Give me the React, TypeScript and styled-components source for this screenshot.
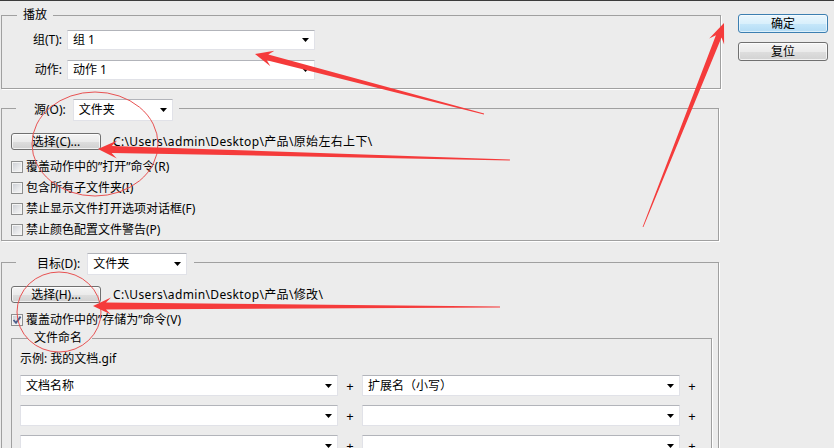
import React from "react";
import styled, { createGlobalStyle } from "styled-components";

const Global = createGlobalStyle`
  html, body { margin: 0; padding: 0; background: #ececec; }
  body {
    font-family: "Noto Sans", "Noto Sans CJK SC", sans-serif;
    font-size: 12px;
    color: #000;
  }
`;

const Page = styled.div`
  position: relative;
  width: 834px;
  height: 448px;
  overflow: hidden;
  box-sizing: border-box;
  border-top: 1px solid #3c3c3c;
  padding-left: 1px;
  display: flex;
  align-items: flex-start;
`;

const Main = styled.div`
  width: 721px;
  padding-top: 6px;
  display: flex;
  flex-direction: column;
`;

const Side = styled.div`
  margin-left: 16px;
  margin-top: 13px;
  display: flex;
  flex-direction: column;
  gap: 9px;
`;

const DlgButton = styled.button<{ $primary?: boolean }>`
  width: 90px;
  height: 19px;
  box-sizing: border-box;
  padding: 0;
  font: inherit;
  font-size: 12px;
  line-height: 16px;
  color: #000;
  border-radius: 3px;
  border: 1px solid ${(p) => (p.$primary ? "#3c7fb1" : "#707070")};
  box-shadow: inset 0 0 0 1px ${(p) => (p.$primary ? "rgba(255,255,255,0.55)" : "rgba(255,255,255,0.7)")};
  background: ${(p) =>
    p.$primary
      ? "linear-gradient(#eaf6fd 0%, #d9f0fc 50%, #c6e7fa 51%, #b3dcf5 100%)"
      : "linear-gradient(#f4f4f4 0%, #ebebeb 50%, #dedede 51%, #d2d2d2 100%)"};
`;

const Group = styled.fieldset<{ $w: number; $mt?: number }>`
  margin: ${(p) => p.$mt ?? 0}px 0 0 0;
  padding: 0;
  min-width: 0;
  width: ${(p) => p.$w}px;
  box-sizing: border-box;
  border: 1px solid #a0a0a0;
  box-shadow: 1px 1px 0 #ffffff;
`;

const Legend = styled.legend<{ $ml: number; $pl: number; $pr?: number }>`
  margin-left: ${(p) => p.$ml}px;
  padding: 0 ${(p) => p.$pr ?? 6}px 0 ${(p) => p.$pl}px;
  line-height: 16px;
`;

const LegendRow = styled.div`
  display: flex;
  align-items: flex-start;
  gap: 7px;
  height: 18px;
  line-height: 22px;
`;

const FormGrid = styled.div`
  display: grid;
  grid-template-columns: 60px 248px;
  column-gap: 5px;
  row-gap: 10px;
  padding: 7px 0 8px 0;
  align-items: center;
`;

const FieldLabel = styled.span`
  text-align: right;
  line-height: 20px;
`;

const Select = styled.div<{ $w: number; $h?: number }>`
  width: ${(p) => p.$w}px;
  height: ${(p) => p.$h ?? 20}px;
  flex: none;
  box-sizing: border-box;
  background: #fff;
  border: 1px solid #e1e2e8;
  border-top-color: #b2b4ba;
  display: flex;
  align-items: center;
  justify-content: space-between;
  padding: 0 5px 0 5px;
  line-height: 16px;
  white-space: nowrap;
`;

const Caret = () => (
  <svg width="7" height="4" viewBox="0 0 7 4">
    <polygon points="0,0 7,0 3.5,4" fill="#000" />
  </svg>
);

const Dropdown = ({ w, h, value }: { w: number; h?: number; value?: string }) => (
  <Select $w={w} $h={h}>
    <span>{value ?? ""}</span>
    <Caret />
  </Select>
);

const Body = styled.div<{ $pt: number; $pb?: number; $pl?: number }>`
  padding: ${(p) => p.$pt}px 0 ${(p) => p.$pb ?? 0}px ${(p) => p.$pl ?? 9}px;
  display: flex;
  flex-direction: column;
`;

const PickRow = styled.div`
  display: flex;
  align-items: center;
  gap: 12px;
  height: 17px;
`;

const PickButton = styled.button`
  width: 90px;
  height: 17px;
  box-sizing: border-box;
  padding: 0;
  font: inherit;
  font-size: 12px;
  line-height: 14px;
  color: #000;
  border: 1px solid #707070;
  border-radius: 3px;
  box-shadow: inset 0 0 0 1px rgba(255, 255, 255, 0.7);
  background: linear-gradient(#f4f4f4 0%, #ebebeb 50%, #dedede 51%, #d0d0d0 100%);
`;

const PathText = styled.span`
  line-height: 16px;
  letter-spacing: 0.35px;
  white-space: nowrap;
`;

const CheckList = styled.div<{ $mt: number; $rh: number }>`
  margin-top: ${(p) => p.$mt}px;
  display: grid;
  grid-auto-rows: ${(p) => p.$rh}px;
`;

const CheckRow = styled.label`
  display: flex;
  align-items: center;
  gap: 3px;
  line-height: 16px;
  white-space: nowrap;
`;

const Box = styled.span`
  width: 12px;
  height: 12px;
  box-sizing: border-box;
  border: 1px solid #8e8f8f;
  box-shadow: inset 0 0 0 1px #f4f4f4;
  background: linear-gradient(135deg, #c9ccd2 0%, #e8e9eb 60%, #f7f7f7 100%);
  display: flex;
  align-items: center;
  justify-content: center;
`;

const Check = ({ text, checked }: { text: string; checked?: boolean }) => (
  <CheckRow>
    <Box>
      {checked && (
        <svg width="10" height="10" viewBox="0 0 10 10">
          <path d="M1.5 5 L4 7.8 L8.6 1.6" stroke="#4a5f8c" strokeWidth="1.8" fill="none" />
        </svg>
      )}
    </Box>
    <span>{text}</span>
  </CheckRow>
);

const InnerBody = styled.div`
  padding: 5px 0 20px 8px;
  display: flex;
  flex-direction: column;
`;

const Example = styled.div`
  line-height: 16px;
  height: 16px;
`;

const NameGrid = styled.div`
  margin-top: 8px;
  display: grid;
  grid-template-columns: 318px 24px 318px 24px;
  grid-auto-rows: 21px;
  row-gap: 9px;
  align-items: center;
`;

const Plus = styled.span`
  text-align: center;
  font-size: 13px;
  line-height: 16px;
`;

const Overlay = styled.svg`
  position: absolute;
  left: 0;
  top: 0;
  pointer-events: none;
`;

type Pt = [number, number];

function arrow(tip: Pt, tail: Pt, L: number, hh: number, sh: number): string {
  const dx = tail[0] - tip[0];
  const dy = tail[1] - tip[1];
  const len = Math.hypot(dx, dy);
  const ux = dx / len;
  const uy = dy / len;
  const nx = -uy;
  const ny = ux;
  const at = (d: number, n: number): Pt => [tip[0] + ux * d + nx * n, tip[1] + uy * d + ny * n];
  const pts: Pt[] = [
    tip,
    at(L, hh),
    at(L * 0.72, sh),
    [tail[0] + nx * 0.4, tail[1] + ny * 0.4],
    [tail[0] - nx * 0.4, tail[1] - ny * 0.4],
    at(L * 0.72, -sh),
    at(L, -hh),
  ];
  return pts.map((p) => `${p[0].toFixed(1)},${p[1].toFixed(1)}`).join(" ");
}

const Annotations = () => (
  <Overlay width="834" height="448" viewBox="0 0 834 448">
    <ellipse cx="95" cy="143" rx="63" ry="52" fill="none" stroke="#e85252" strokeWidth="1" />
    <ellipse cx="59" cy="311" rx="42" ry="40" fill="none" stroke="#e85252" strokeWidth="1" />
    <polygon points={arrow([255, 53], [484, 113], 18, 8, 3)} fill="#f53b3b" />
    <polygon points={arrow([98, 148], [510, 159], 19, 9, 3.5)} fill="#f53b3b" />
    <polygon points={arrow([724, 22], [643, 226], 20, 8, 3)} fill="#f53b3b" />
    <polygon points={arrow([93, 305], [500, 306], 18, 8.5, 3.5)} fill="#f53b3b" />
  </Overlay>
);

export default function App() {
  return (
    <>
      <Global />
      <Page>
        <Main>
          <Group $w={720}>
            <Legend $ml={15} $pl={6}>播放</Legend>
            <FormGrid>
              <FieldLabel>组(T):</FieldLabel>
              <Dropdown w={248} value="组 1" />
              <FieldLabel>动作:</FieldLabel>
              <Dropdown w={248} value="动作 1" />
            </FormGrid>
          </Group>

          <Group $w={718} $mt={10}>
            <Legend $ml={14} $pl={18} $pr={6}>
              <LegendRow>
                <span>源(O):</span>
                <Dropdown w={100} h={22} value="文件夹" />
              </LegendRow>
            </Legend>
            <Body $pt={16} $pb={0}>
              <PickRow>
                <PickButton>选择(C)...</PickButton>
                <PathText>C:\Users\admin\Desktop\产品\原始左右上下\</PathText>
              </PickRow>
              <CheckList $mt={6} $rh={21}>
                <Check text="覆盖动作中的”打开”命令(R)" />
                <Check text="包含所有子文件夹(I)" />
                <Check text="禁止显示文件打开选项对话框(F)" />
                <Check text="禁止颜色配置文件警告(P)" />
              </CheckList>
            </Body>
          </Group>

          <Group $w={718} $mt={12}>
            <Legend $ml={14} $pl={21} $pr={7}>
              <LegendRow>
                <span>目标(D):</span>
                <Dropdown w={100} h={22} value="文件夹" />
              </LegendRow>
            </Legend>
            <Body $pt={15} $pb={20}>
              <PickRow>
                <PickButton>选择(H)...</PickButton>
                <PathText>C:\Users\admin\Desktop\产品\修改\</PathText>
              </PickRow>
              <CheckList $mt={7} $rh={20}>
                <Check text="覆盖动作中的”存储为”命令(V)" checked />
              </CheckList>
              <Group $w={701}>
                <Legend $ml={16} $pl={6} $pr={10}>文件命名</Legend>
                <InnerBody>
                  <Example>示例: 我的文档.gif</Example>
                  <NameGrid>
                    <Dropdown w={318} h={21} value="文档名称" />
                    <Plus>+</Plus>
                    <Dropdown w={318} h={21} value="扩展名（小写）" />
                    <Plus>+</Plus>
                    <Dropdown w={318} h={21} />
                    <Plus>+</Plus>
                    <Dropdown w={318} h={21} />
                    <Plus>+</Plus>
                    <Dropdown w={318} h={21} />
                    <Plus>+</Plus>
                    <Dropdown w={318} h={21} />
                    <Plus>+</Plus>
                  </NameGrid>
                </InnerBody>
              </Group>
            </Body>
          </Group>
        </Main>
        <Side>
          <DlgButton $primary>确定</DlgButton>
          <DlgButton>复位</DlgButton>
        </Side>
        <Annotations />
      </Page>
    </>
  );
}
